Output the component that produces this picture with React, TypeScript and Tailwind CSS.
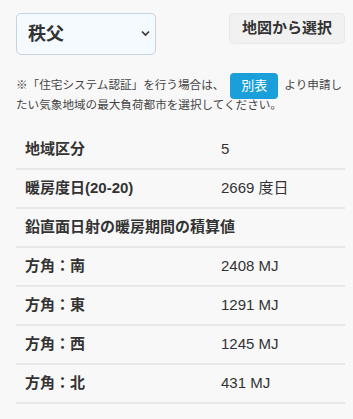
import React from 'react'

type Row = { label: string; value?: string }

const rows: Row[] = [
  { label: '地域区分', value: '5' },
  { label: '暖房度日(20-20)', value: '2669 度日' },
  { label: '鉛直面日射の暖房期間の積算値' },
  { label: '方角：南', value: '2408 MJ' },
  { label: '方角：東', value: '1291 MJ' },
  { label: '方角：西', value: '1245 MJ' },
  { label: '方角：北', value: '431 MJ' },
]

const font = { fontFamily: '"Liberation Sans", "Noto Sans CJK JP", sans-serif' }

const App = () => {
  return (
    <div className="min-h-screen w-full bg-[#f8f8f8] pl-4 pr-2 pt-[13px] pb-3 text-[#333]" style={font}>
      {/* Top row */}
      <div className="flex items-start justify-between">
        <div className="relative w-[140px] h-[42px]">
          <select
            defaultValue="chichibu"
            className="w-full h-full appearance-none rounded-[5px] border border-[#c3d3df] bg-[#f5faff] pl-[11px] pr-6 text-[18px] font-bold text-[#333] outline-none"
          >
            <option value="chichibu">秩父</option>
          </select>
          <svg className="pointer-events-none absolute right-[6px] top-[17px]" width="9" height="7" viewBox="0 0 9 7">
            <path d="M1 1.5 L4.5 5 L8 1.5" fill="none" stroke="#333" strokeWidth="1.6" />
          </svg>
        </div>
        <button className="w-[116px] h-[31px] rounded-[4px] border border-[#e9e9e9] bg-[#f1f1f1] text-[15px] font-bold text-[#333]">
          地図から選択
        </button>
      </div>

      {/* Note */}
      <p className="mt-[20px] text-[11.6px] leading-[19px] text-[#444]">
        ※「住宅システム認証」を行う場合は、
        <span className="inline-block align-middle -my-1 mx-[6px] h-[26px] leading-[26px] rounded-[4px] bg-[#1a9fdb] px-[11px] text-[13px] text-white">
          別表
        </span>
        より申請したい気象地域の最大負荷都市を選択してください。
      </p>

      {/* Table */}
      <div className="mt-[17px] w-[329px]">
        {rows.map((r) => (
          <div key={r.label} className="flex items-center h-[39px] border-b-2 border-[#e8e8e8] text-[15px]">
            <div className={(r.value ? 'w-[205px]' : 'flex-1') + ' pl-[9px] font-bold text-[#333]'}>{r.label}</div>
            {r.value && <div className="flex-1 text-[#333]">{r.value}</div>}
          </div>
        ))}
      </div>
    </div>
  )
}

export default App
